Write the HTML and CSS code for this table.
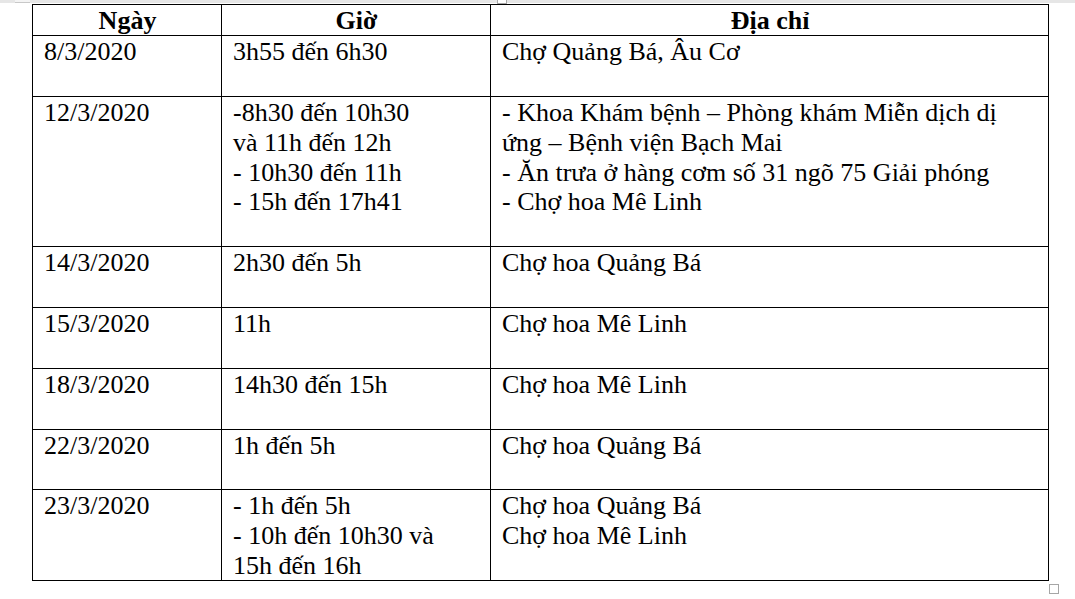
FILE: index.html
```html
<!DOCTYPE html>
<html lang="vi">
<head>
<meta charset="utf-8">
<title>Lịch trình</title>
<link rel="stylesheet" href="styles.css">
</head>
<body>
<div class="topbar">
  <span class="tab"></span>
  <span class="handle-top"></span>
</div>
<div class="doc">
<table class="schedule">
  <colgroup>
    <col class="c1">
    <col class="c2">
    <col class="c3">
  </colgroup>
  <thead>
    <tr>
      <th><div class="txt">Ngày</div></th>
      <th><div class="txt">Giờ</div></th>
      <th><div class="txt">Địa chỉ</div></th>
    </tr>
  </thead>
  <tbody>
    <tr class="gap">
      <td><div class="txt">8/3/2020</div></td>
      <td><div class="txt">3h55 đến 6h30</div></td>
      <td><div class="txt">Chợ Quảng Bá, Âu Cơ</div></td>
    </tr>
    <tr class="gap">
      <td><div class="txt">12/3/2020</div></td>
      <td><div class="txt">-8h30 đến 10h30<br>và 11h đến 12h<br>- 10h30 đến 11h<br>- 15h đến 17h41</div></td>
      <td><div class="txt">- Khoa Khám bệnh – Phòng khám Miễn dịch dị<br>ứng – Bệnh viện Bạch Mai<br>- Ăn trưa ở hàng cơm số 31 ngõ 75 Giải phóng<br>- Chợ hoa Mê Linh</div></td>
    </tr>
    <tr class="gap">
      <td><div class="txt">14/3/2020</div></td>
      <td><div class="txt">2h30 đến 5h</div></td>
      <td><div class="txt">Chợ hoa Quảng Bá</div></td>
    </tr>
    <tr class="gap">
      <td><div class="txt">15/3/2020</div></td>
      <td><div class="txt">11h</div></td>
      <td><div class="txt">Chợ hoa Mê Linh</div></td>
    </tr>
    <tr class="gap">
      <td><div class="txt">18/3/2020</div></td>
      <td><div class="txt">14h30 đến 15h</div></td>
      <td><div class="txt">Chợ hoa Mê Linh</div></td>
    </tr>
    <tr class="gap">
      <td><div class="txt">22/3/2020</div></td>
      <td><div class="txt">1h đến 5h</div></td>
      <td><div class="txt">Chợ hoa Quảng Bá</div></td>
    </tr>
    <tr>
      <td><div class="txt">23/3/2020</div></td>
      <td><div class="txt">- 1h đến 5h<br>- 10h đến 10h30 và<br>15h đến 16h</div></td>
      <td><div class="txt">Chợ hoa Quảng Bá<br>Chợ hoa Mê Linh</div></td>
    </tr>
  </tbody>
</table>
<span class="handle-resize"></span>
</div>
</body>
</html>
```

FILE: styles.css
```css
html, body {
  margin: 0;
  padding: 0;
  background: #ffffff;
}

body {
  font-family: "Liberation Serif", "Times New Roman", serif;
  color: #000000;
  width: 1075px;
  height: 599px;
  overflow: hidden;
}

.topbar {
  position: relative;
  height: 3px;
  background: #e6e6e6;
}

.tab {
  position: absolute;
  left: 15px;
  top: 0;
  width: 15px;
  height: 2px;
  background: #f4f4f4;
  border-bottom: 1px solid #c8c8c8;
}

.handle-top {
  position: absolute;
  left: 497px;
  top: -6px;
  width: 8px;
  height: 8px;
  background: #ffffff;
  border: 1px solid #a6a6a6;
}

.doc {
  position: relative;
  padding: 1px 0 0 32px;
}

.schedule {
  border-collapse: collapse;
  table-layout: fixed;
  width: 1016px;
  font-size: 26px;
  line-height: 29.9px;
}

.c1 { width: 189px; }
.c2 { width: 269px; }
.c3 { width: 558px; }

.schedule th,
.schedule td {
  border: 1px solid #000000;
  padding: 0 10px 0 11px;
  vertical-align: top;
  text-align: left;
  white-space: nowrap;
}

.schedule th {
  font-weight: bold;
  text-align: center;
}

.txt {
  margin-top: 1px;
  margin-bottom: -1px;
}

.schedule tr.gap td {
  padding-bottom: 29.9px;
}

.handle-resize {
  position: absolute;
  left: 1049px;
  top: 581px;
  width: 8px;
  height: 8px;
  background: #ffffff;
  border: 1px solid #a6a6a6;
}
```
